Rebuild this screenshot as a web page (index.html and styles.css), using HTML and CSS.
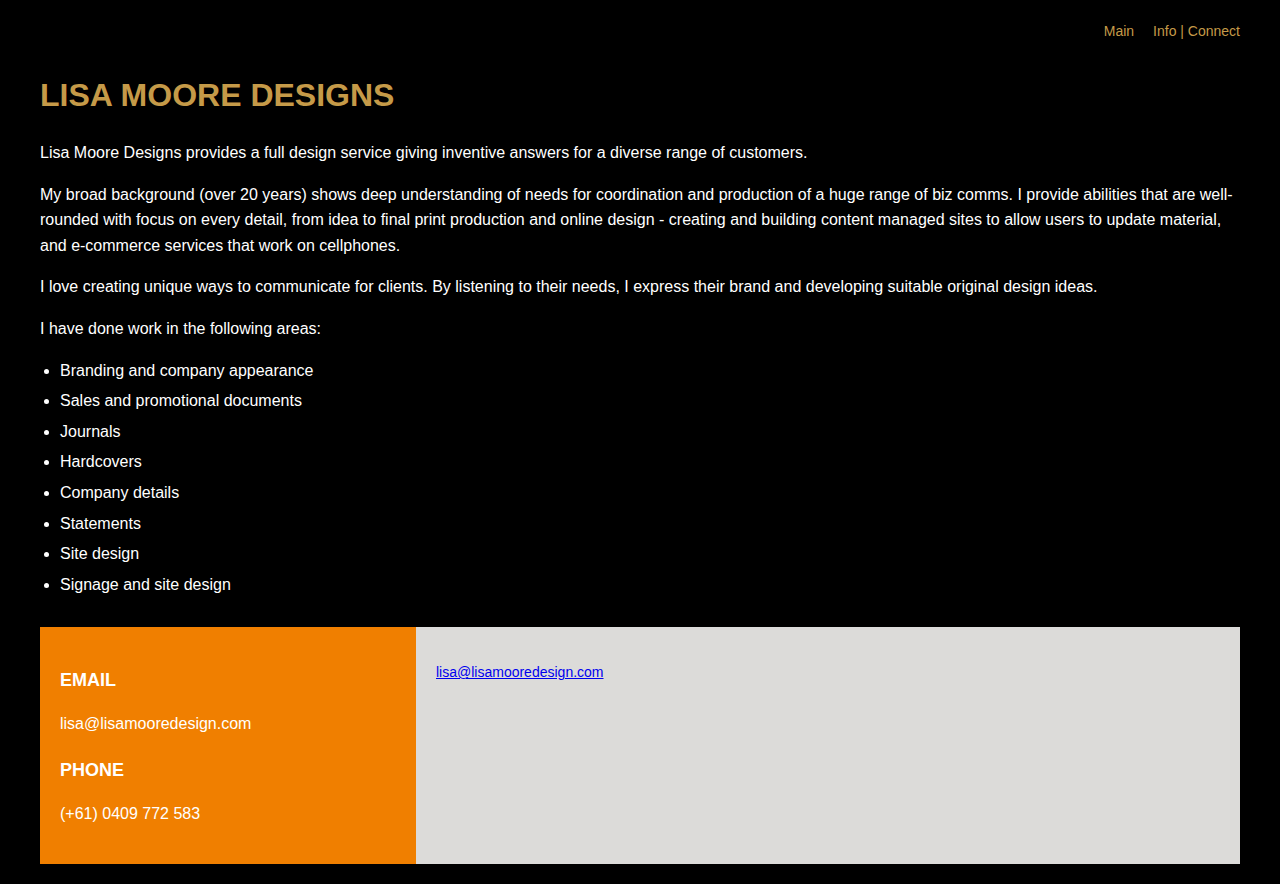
FILE: index.html
```html
<!DOCTYPE html>
<html lang="en">
<head>
<meta charset="utf-8">
<title>Lisa Moore Designs</title>
<link rel="stylesheet" href="styles.css">
</head>
<body>
<div class="page">
  <nav class="topnav">
    <a href="#">Main</a>
    <a href="#">Info | Connect</a>
  </nav>
  <h1 class="title">LISA MOORE DESIGNS</h1>
  <p>Lisa Moore Designs provides a full design service giving inventive answers for a diverse range of customers.</p>
  <p>My broad background (over 20 years) shows deep understanding of needs for coordination and production of a huge range of biz comms. I provide abilities that are well-rounded with focus on every detail, from idea to final print production and online design - creating and building content managed sites to allow users to update material, and e-commerce services that work on cellphones.</p>
  <p>I love creating unique ways to communicate for clients. By listening to their needs, I express their brand and developing suitable original design ideas.</p>
  <p>I have done work in the following areas:</p>
  <ul class="areas">
    <li>Branding and company appearance</li>
    <li>Sales and promotional documents</li>
    <li>Journals</li>
    <li>Hardcovers</li>
    <li>Company details</li>
    <li>Statements</li>
    <li>Site design</li>
    <li>Signage and site design</li>
  </ul>
  <section class="contact">
    <div class="contact-info">
      <h3>EMAIL</h3>
      <p>lisa@lisamooredesign.com</p>
      <h3>PHONE</h3>
      <p class="last">(+61) 0409 772 583</p>
    </div>
    <div class="contact-side">
      <a href="#">lisa@lisamooredesign.com</a>
    </div>
  </section>
</div>
</body>
</html>
```
FILE: styles.css
```css
html, body {
  margin: 0;
  padding: 0;
  background: #000;
}
body {
  font-family: "Liberation Sans", Arial, sans-serif;
  color: #fff;
  font-size: 16px;
  line-height: 1.6;
}
.page {
  padding: 0 40px 20px;
}
.topnav {
  display: flex;
  justify-content: flex-end;
  gap: 19px;
  padding-top: 22px;
  font-size: 14px;
  line-height: 18px;
}
.topnav a {
  color: #c59a48;
  text-decoration: none;
}
.title {
  margin: 36px 0 26px;
  font-size: 32px;
  line-height: 38px;
  font-weight: bold;
  color: #c59a48;
}
p {
  margin: 0 0 16px;
}
.areas {
  margin: 0 0 30px;
  padding-left: 20px;
}
.areas li {
  margin-bottom: 5px;
}
.contact {
  display: flex;
  height: 237px;
}
.contact-info {
  width: 336px;
  background: #f07f00;
  padding: 40px 20px 0;
}
.contact-info h3 {
  margin: 0 0 18px;
  font-size: 18px;
  line-height: 26px;
  font-weight: bold;
}
.contact-info p {
  margin: 0 0 20px;
}
.contact-info p.last {
  margin-bottom: 0;
}
.contact-side {
  flex: 1;
  background: #dcdbd9;
  padding: 36px 20px 0;
  font-size: 14px;
  line-height: 18px;
}
.contact-side a {
  color: #0000ee;
}
```
